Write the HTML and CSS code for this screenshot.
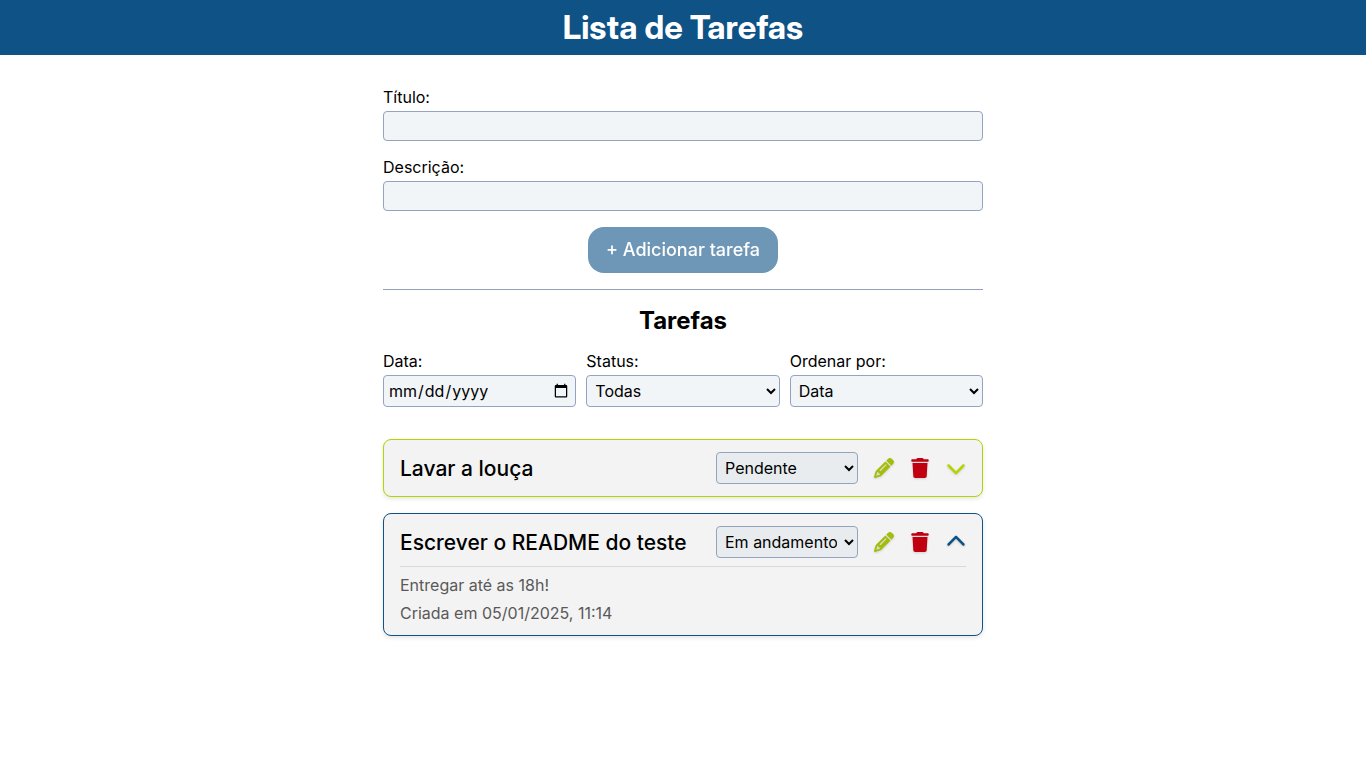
FILE: index.html
```html
<!DOCTYPE html>
<html lang="pt-BR">
<head>
<meta charset="utf-8">
<meta name="viewport" content="width=device-width, initial-scale=1">
<title>Lista de Tarefas</title>
<link rel="stylesheet" href="styles.css">
</head>
<body>
<svg class="sprite" aria-hidden="true">
  <symbol id="pencil" viewBox="0 0 512 512"><path d="M410.3 231l11.3-11.3-33.9-33.9-62.1-62.1L291.7 89.8l-11.3 11.3-22.6 22.6L58.6 322.9c-10.4 10.4-18 23.3-22.2 37.4L1 480.7c-2.5 8.4-.2 17.5 6.1 23.7s15.3 8.5 23.7 6.1l120.3-35.4c14.1-4.2 27-11.8 37.4-22.2L387.7 253.7 410.3 231zM160 399.4l-9.1 22.7c-4 3.1-8.5 5.4-13.3 6.9L59.4 452l23-78.1c1.4-4.9 3.8-9.4 6.9-13.3l22.7-9.1 0 32c0 8.8 7.2 16 16 16l32 0zM362.7 18.7L348.3 33.2 325.7 55.8 314.3 67.1l33.9 33.9 62.1 62.1 33.9 33.9 11.3-11.3 22.6-22.6 14.5-14.5c25-25 25-65.5 0-90.5L453.3 18.7c-25-25-65.5-25-90.5 0zm-47.4 168l-144 144c-6.2 6.2-16.4 6.2-22.6 0s-6.2-16.4 0-22.6l144-144c6.2-6.2 16.4-6.2 22.6 0s6.2 16.4 0 22.6z"/></symbol>
  <symbol id="trash" viewBox="0 0 448 512"><path d="M135.2 17.7L128 32 32 32C14.3 32 0 46.3 0 64S14.3 96 32 96l384 0c17.7 0 32-14.3 32-32s-14.3-32-32-32l-96 0-7.2-14.3C307.4 6.8 296.3 0 284.2 0L163.8 0c-12.1 0-23.2 6.8-28.6 17.7zM416 128L32 128 53.2 467c1.6 25.3 22.6 45 47.9 45l245.8 0c25.3 0 46.3-19.7 47.9-45L416 128z"/></symbol>
  <symbol id="chevron-down" viewBox="0 0 512 512"><path d="M233.4 406.6c12.5 12.5 32.8 12.5 45.3 0l192-192c12.5-12.5 12.5-32.8 0-45.3s-32.8-12.5-45.3 0L256 338.7 86.6 169.4c-12.5-12.5-32.8-12.5-45.3 0s-12.5 32.8 0 45.3l192 192z"/></symbol>
  <symbol id="chevron-up" viewBox="0 0 512 512"><path d="M233.4 105.4c12.5-12.5 32.8-12.5 45.3 0l192 192c12.5 12.5 12.5 32.8 0 45.3s-32.8 12.5-45.3 0L256 173.3 86.6 342.6c-12.5 12.5-32.8 12.5-45.3 0s-12.5-32.8 0-45.3l192-192z"/></symbol>
</svg>
<header class="header"><h1 class="header-title">Lista de Tarefas</h1></header>
<main class="content">
  <form class="task-form">
    <div class="field">
      <label for="title">Título:</label>
      <input class="control text-input" id="title" type="text">
    </div>
    <div class="field">
      <label for="description">Descrição:</label>
      <input class="control text-input" id="description" type="text">
    </div>
    <button class="add-button" type="submit" disabled>+ Adicionar tarefa</button>
  </form>
  <section class="tasks">
    <h2 class="tasks-title">Tarefas</h2>
    <div class="filters">
      <div class="field">
        <label for="date">Data:</label>
        <input class="control date-input" id="date" type="date">
      </div>
      <div class="field">
        <label for="status">Status:</label>
        <select class="control select" id="status"><option>Todas</option><option>Pendente</option><option>Em andamento</option><option>Concluída</option></select>
      </div>
      <div class="field">
        <label for="order">Ordenar por:</label>
        <select class="control select" id="order"><option>Data</option><option>Status</option></select>
      </div>
    </div>
    <ul class="task-list">
      <li class="task task-pending">
        <div class="task-row">
          <h3 class="task-title">Lavar a louça</h3>
          <select class="control select task-status" aria-label="Status de Lavar a louça"><option selected>Pendente</option><option>Em andamento</option><option>Concluída</option></select>
          <button class="icon-button edit" type="button" aria-label="Editar"><svg class="icon"><use href="#pencil"/></svg></button>
          <button class="icon-button delete" type="button" aria-label="Excluir"><svg class="icon"><use href="#trash"/></svg></button>
          <button class="icon-button toggle" type="button" aria-label="Mostrar detalhes" aria-expanded="false"><svg class="icon"><use href="#chevron-down"/></svg></button>
        </div>
      </li>
      <li class="task task-progress">
        <div class="task-row">
          <h3 class="task-title">Escrever o README do teste</h3>
          <select class="control select task-status" aria-label="Status de Escrever o README do teste"><option>Pendente</option><option selected>Em andamento</option><option>Concluída</option></select>
          <button class="icon-button edit" type="button" aria-label="Editar"><svg class="icon"><use href="#pencil"/></svg></button>
          <button class="icon-button delete" type="button" aria-label="Excluir"><svg class="icon"><use href="#trash"/></svg></button>
          <button class="icon-button toggle" type="button" aria-label="Ocultar detalhes" aria-expanded="true"><svg class="icon"><use href="#chevron-up"/></svg></button>
        </div>
        <div class="task-details">
          <p>Entregar até as 18h!</p>
          <p>Criada em 05/01/2025, 11:14</p>
        </div>
      </li>
    </ul>
  </section>
</main>
</body>
</html>
```
FILE: styles.css
```css
* {
  box-sizing: border-box;
  margin: 0;
  padding: 0;
}

body {
  font-family: Inter, "Liberation Sans", sans-serif;
  font-size: 16px;
  line-height: 20px;
  color: #000;
  background: #fff;
}

input, select, button {
  font: inherit;
  color: inherit;
}

.sprite {
  display: none;
}

.header {
  padding: 8px;
  background: #0e5286;
  color: #fff;
  text-align: center;
}

.header-title {
  font-family: "Inter Display", Inter, "Liberation Sans", sans-serif;
  font-variation-settings: "opsz" 32;
  font-size: 33px;
  line-height: 39px;
  font-weight: 700;
}

.content {
  max-width: 632px;
  margin: 0 auto;
  padding: 32px 16px;
}

.task-form {
  display: flex;
  flex-direction: column;
  gap: 16px;
  padding-bottom: 16px;
  border-bottom: 1px solid #94a0b8;
}

.field {
  display: flex;
  flex-direction: column;
  gap: 4px;
  min-width: 0;
}

.control {
  width: 100%;
  border: 1px solid #94a3c0;
  border-radius: 4px;
  background: #f1f5f8;
}

.text-input {
  height: 30px;
  padding: 4px;
}

.date-input {
  height: 32px;
  padding: 4px;
}

.select {
  height: 32px;
  padding: 4px;
}

.add-button {
  align-self: center;
  padding: 12px 18px;
  border: none;
  border-radius: 16px;
  background: #0e5286;
  color: #fff;
  font-size: 18px;
  line-height: 22px;
  font-weight: 500;
}

.add-button:disabled {
  opacity: 0.6;
}

.tasks-title {
  padding: 16px 0;
  font-size: 24px;
  line-height: 29px;
  font-weight: 700;
  text-align: center;
}

.filters {
  display: grid;
  grid-template-columns: repeat(3, 1fr);
  gap: 10px;
}

.task-list {
  display: flex;
  flex-direction: column;
  gap: 16px;
  margin-top: 32px;
  list-style: none;
}

.task {
  padding: 12px 16px;
  border: 1px solid currentColor;
  border-radius: 8px;
  background: #f3f3f3;
  box-shadow: 0 2px 4px rgba(0, 0, 0, 0.1);
}

.task-pending {
  color: #b5d300;
}

.task-progress {
  color: #0e5286;
}

.task-row {
  display: flex;
  align-items: center;
  gap: 16px;
}

.task-title {
  flex: 1;
  color: #000;
  font-size: 21px;
  line-height: 25px;
  font-weight: 500;
}

.task-status {
  width: 142px;
  background: #e8ecef;
  color: #000;
}

.icon-button {
  display: flex;
  border: none;
  background: none;
  cursor: pointer;
}

.icon {
  width: 20px;
  height: 20px;
  fill: currentColor;
  filter: drop-shadow(0 1px 1px rgba(0, 0, 0, 0.15));
}

.edit {
  color: #a3bd0a;
}

.delete {
  color: #c00010;
}

.task-details {
  display: flex;
  flex-direction: column;
  gap: 8px;
  margin-top: 8px;
  padding-top: 8px;
  border-top: 1px solid #d9d9d9;
  color: #595959;
}
```
